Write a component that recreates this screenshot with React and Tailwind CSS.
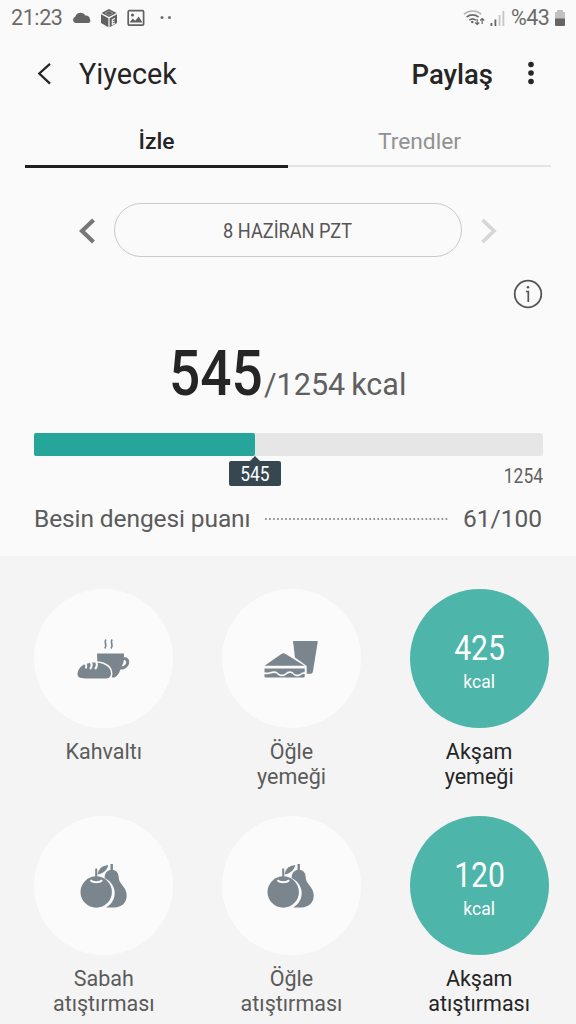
function StatusBar() {
  return (
    <div className="flex h-[36px] items-center pl-[11px] pr-[10px] text-[#6b6b6b]">
      <span className="w-[53px] text-[21.5px] leading-none tracking-[-0.4px]">21:23</span>
      <svg className="ml-[8px]" width="20" height="14" viewBox="0 0 20 14" fill="#656565">
        <path d="M3.500 12a3.300 3.300 0 0 1-.3-6.300A5.600 5.600 0 0 1 13.500 4.600a4 4 0 0 1 4.500 4c.8 1.300.3 3.400-1.500 3.400z" />
      </svg>
      <svg className="ml-[8px]" width="18" height="20" viewBox="0 0 18 20">
        <path d="M9 1l7.5 4L9 9 1.5 5z" fill="#606060" />
        <path d="M1 6.2l7.4 4v9L1 15z" fill="#606060" />
        <path d="M17 6.2l-7.4 4v9L17 15z" fill="#606060" />
        <path d="M14.9 10.4l-2.600 1.400v4.600l2.600-1.400M12.500 14l2-1" fill="none" stroke="#eee" strokeWidth="1.2" />
        <path d="M5 5.200l4-2.100 4 2.100-4 2.100z" fill="none" stroke="#aaa" strokeWidth=".7" />
      </svg>
      <svg className="ml-[9px]" width="18" height="18" viewBox="0 0 18 18">
        <rect x="1.2" y="1.7" width="15.4" height="14.4" rx="1" fill="none" stroke="#626262" strokeWidth="1.7" />
        <path d="M2.500 13.500l3.300-4 2.400 2.300 3.500-4.200 3.800 5.900z" fill="#626262" />
        <circle cx="5.5" cy="6" r="1.6" fill="#626262" />
      </svg>
      <svg className="ml-[14px]" width="14" height="6" viewBox="0 0 14 6" fill="#6d6d6d">
        <circle cx="3" cy="2.5" r="1.5" />
        <circle cx="10.5" cy="2.5" r="1.5" />
      </svg>
      <div className="ml-auto flex items-center">
        <svg width="23" height="20" viewBox="0 0 23 20" fill="none" strokeWidth="1.6">
          <path d="M1 6.2a13 13 0 0 1 17.2 0" stroke="#b2b2b2" />
          <path d="M3.600 9.200a9 9 0 0 1 12 0M6.300 12.200a5.200 5.200 0 0 1 6.600 0" stroke="#6b6b6b" />
          <circle cx="9.3" cy="14" r="1.3" fill="#6b6b6b" />
          <path d="M14.200 11v5.500m-2.100-2 2.100 2 2.100-2M19.200 16v-5.500m-2.100 2 2.100-2 2.100 2" stroke="#666" strokeWidth="1.2" />
        </svg>
        <svg className="ml-[3px]" width="17" height="18" viewBox="0 0 17 18">
          <path d="M1.500 14h1.800v3H1.500zM5.500 10.500h1.800V17H5.500z" fill="#666" />
          <path d="M9.700 6h1.800v11H9.700zM13.500 2h1.800v15h-1.800z" fill="#c5c5c5" />
        </svg>
        <span className="ml-[5px] w-[39px] text-[21.5px] leading-none tracking-[-0.5px]">%43</span>
        <svg className="ml-[4px]" width="12" height="18" viewBox="0 0 12 18">
          <path d="M3 1h6v2H11v7H1V3h2z" fill="#c1c1c1" />
          <path d="M1 9.500h10V16a1 1 0 0 1-1 1H2a1 1 0 0 1-1-1z" fill="#666" />
        </svg>
      </div>
    </div>
  )
}

function BreakfastIcon() {
  return (
    <svg width="54" height="42" viewBox="0 0 54 42" fill="#7b858d">
      <path d="M29 1.500c-3 3.400 2.200 5-1.200 9M35.200 1.500c-3 3.400 2.200 5-1.200 9" fill="none" stroke="#7b858d" strokeWidth="1.7" />
      <path d="M20 15.500h27v3.800c8-.8 6.800 12.200-3.600 12.200-1.300 4.200-3.600 7-6 8h-2.700c2.800-8.500-3-15.400-14.400-16.200z" />
      <path d="M46.800 22.100c3.700-.3 3.200 5.800-2.200 6.500 1.200-1.800 2-4 2.200-6.500z" fill="#fbfbfb" />
      <path d="M8.400 40.500c-6 0-8.400-1.600-7.800-5.400.8-5 5.200-9.200 10-9.600C15.400 23 34 24.200 34 35.200c0 3.800-2 5.300-6 5.300z" />
      <path d="M8 24.800c1.300 1.500 1.500 4.200.6 5.500M13.500 24c1.600 1.800 1.400 4.600-.4 7M19 24c1.400 2 1 4.600-.9 7" fill="none" stroke="#fbfbfb" strokeWidth="2.1" />
    </svg>
  )
}

function LunchIcon() {
  return (
    <svg width="54" height="38" viewBox="0 0 54 38" fill="#7b858d">
      <path d="M29 1h23.800c.7 0 1 .4.900 1l-4.800 29.400c-.2 1.400-1.300 2.300-2.700 2.300h-3.500V26L31 17.400z" />
      <path d="M.5 25.700L17.400 14c1.500-1 2.800-1 4.200 0l19 11.700z" />
      <path d="M.5 28.400h40.200V32c-4.300.4-3.600 2.500-7.500 2.500-4.200 0-3.400-3.300-7.200-3.300-4 0-4 3.300-8 3.300s-3.800-3.300-7.800-3.300-3.500 1.800-9.700 1z" />
      <path d="M.5 34c5.800.8 6.300-1 9.700-1 4 0 3.400 3.300 7.800 3.300 4.300 0 4.300-3.300 8-3.300 3.600 0 3.200 3.300 7.200 3.300 4.200 0 3.600-2.400 7.500-2.500v2.400c0 .8-.6 1.300-1.300 1.300H1.800C1 37.500.5 37 .5 36.200z" />
    </svg>
  )
}

function FruitIcon() {
  return (
    <svg width="48" height="46" viewBox="0 0 48 46" fill="#7b858d">
      <path d="M30.500 1h2.400v6c4 .6 5.800 3.600 5.800 7.300 0 7.300 8 9 8 18.500 0 7-5.200 11.700-12.400 11.700h-8.100c12.200-7 11-23.500-1.400-29.200-.5-4.300 1.700-7.700 5.700-8.300z" />
      <circle cx="16.200" cy="29" r="15.700" />
      <path d="M10.400 17.200c2.600 2.600 9.200 2.600 11.800 0" fill="none" stroke="#fbfbfb" strokeWidth="2" />
      <path d="M15.200 5.500h2v9h-2z" />
      <path d="M17.500 11.500C18.400 5.800 22 2.700 28.300 2c-1.200 5-4.600 8.200-10.800 9.500z" />
    </svg>
  )
}

const meals = [
  { name: ['Kahvaltı'], Icon: BreakfastIcon },
  { name: ['Öğle', 'yemeği'], Icon: LunchIcon },
  { name: ['Akşam', 'yemeği'], kcal: 425 },
  { name: ['Sabah', 'atıştırması'], Icon: FruitIcon },
  { name: ['Öğle', 'atıştırması'], Icon: FruitIcon },
  { name: ['Akşam', 'atıştırması'], kcal: 120 },
]

function Meal({ name, Icon, kcal }) {
  return (
    <button className="flex h-[227px] flex-col items-center" type="button">
      <span
        className={`flex size-[139px] shrink-0 flex-col items-center justify-center rounded-full ${
          kcal ? 'bg-[#4db5a9] text-white' : 'bg-[#fbfbfb]'
        }`}
      >
        {kcal ? (
          <>
            <span className="mt-[5px] inline-block scale-x-[0.86] text-[35px] leading-[40px]">{kcal}</span>
            <span className="mt-[2px] text-[17.5px] leading-[22px]">kcal</span>
          </>
        ) : (
          <Icon />
        )}
      </span>
      <span
        className={`mt-[11px] text-[21.5px] leading-[25px] ${kcal ? 'text-[#252525]' : 'text-[#5b5b5b]'}`}
      >
        {name.map((line) => (
          <span key={line} className="block">{line}</span>
        ))}
      </span>
    </button>
  )
}

export default function App() {
  const eaten = 545
  const goal = 1254

  return (
    <div className="flex h-[1024px] w-[576px] flex-col overflow-hidden bg-[#fafafa] font-[Roboto,'Liberation_Sans',sans-serif] text-[#252525]">
      <StatusBar />

      <header className="flex h-[78px] items-center pl-[36px] pr-[38px]">
        <svg className="-mt-[3px]" width="18" height="24" viewBox="0 0 18 24" fill="none" stroke="#252525" strokeWidth="2.3">
          <path d="M14 1.800L3.300 11.500 14 21.600" />
        </svg>
        <h1 className="ml-[25px] text-[28.8px]">Yiyecek</h1>
        <span className="ml-auto text-[27.5px] font-medium">Paylaş</span>
        <svg className="-mt-[4px] ml-[31px]" width="14" height="26" viewBox="0 0 14 26" fill="#252525">
          <circle cx="7" cy="4.5" r="2.8" />
          <circle cx="7" cy="13" r="2.8" />
          <circle cx="7" cy="21.5" r="2.8" />
        </svg>
      </header>

      <nav className="mx-[25px] flex h-[54px] text-[22.8px]">
        <div className="flex w-[263px] justify-center border-b-[3px] border-[#202020] pt-[11px] font-medium">İzle</div>
        <div className="mb-px flex flex-1 justify-center border-b-2 border-[#e4e4e4] pt-[11px] text-[#929292]">Trendler</div>
      </nav>

      <div className="mt-[35px] flex h-[54px] items-center justify-center">
        <svg className="mt-[2px]" width="18" height="26" viewBox="0 0 18 26" fill="none" stroke="#777" strokeWidth="4.2">
          <path d="M15.500 2L4 13l11.500 11" />
        </svg>
        <div className="mx-[18px] flex h-[54px] w-[348px] items-center justify-center rounded-full border border-[#c9c9c9] pt-[3px] text-[21px] text-[#555]">
          <span className="inline-block scale-x-[0.865]">8 HAZİRAN PZT</span>
        </div>
        <svg className="mt-[2px]" width="18" height="26" viewBox="0 0 18 26" fill="none" stroke="#d5d5d5" strokeWidth="3.6">
          <path d="M2.500 2L14 13 2.500 24" />
        </svg>
      </div>

      <svg className="mt-[22px] ml-[513px] shrink-0" width="30" height="30" viewBox="0 0 30 30" fill="none" stroke="#555">
        <circle cx="15" cy="15" r="13.3" strokeWidth="1.8" />
        <path d="M13 12.500h2.300V23" strokeWidth="1.7" />
        <circle cx="15" cy="8.3" r="1.3" fill="#555" stroke="none" />
      </svg>

      <div className="mt-[29px] flex h-[72px] items-baseline pl-[169px]">
        <span className="inline-block w-[95px] origin-left scale-x-[0.88] text-[62.5px] leading-[72px] font-medium">{eaten}</span>
        <span className="text-[30.5px] text-[#606060]">/{goal}</span>
        <span className="ml-[6px] text-[30.5px] text-[#606060]">kcal</span>
      </div>

      <div className="relative mr-[33px] ml-[33.5px] mt-[23px] h-[23px] rounded-[2px] bg-[#e6e6e6]">
        <div className="h-full rounded-[2px] bg-[#26a69a]" style={{ width: `${(eaten / goal) * 100}%` }} />
        {/* marker below the end of the filled part */}
        <div
          className="absolute top-[28px] flex h-[25px] w-[52px] -translate-x-1/2 items-center justify-center rounded-[2px] bg-[#37474f] text-[20px] text-white"
          style={{ left: `${(eaten / goal) * 100}%` }}
        >
          <svg className="absolute -top-[5px]" width="12" height="6" viewBox="0 0 12 6" fill="#37474f">
            <path d="M0 6l6-6 6 6z" />
          </svg>
          <span className="inline-block scale-x-[0.87]">{eaten}</span>
        </div>
      </div>

      <div className="mt-[5px] flex justify-end pr-[33px]">
        <span className="inline-block origin-right scale-x-[0.87] text-[20px] leading-[30px] text-[#606060]">{goal}</span>
      </div>

      <div className="mt-[10px] flex h-[36px] items-center pl-[34px] pr-[34px] text-[24.5px] text-[#5b5b5b]">
        <span className="tracking-[-0.1px]">Besin dengesi puanı</span>
        <svg className="ml-[14px] flex-1" height="2" viewBox="0 0 184 2" preserveAspectRatio="none">
          <path d="M0 1h184" stroke="#777" strokeWidth="1.5" strokeDasharray="1.8 2.2" />
        </svg>
        <span className="ml-[14px]">61/100</span>
      </div>

      <main className="mt-auto h-[468px] shrink-0 bg-[#f4f4f4] pt-[33px] pr-[3px] pl-[10px]">
        <div className="grid grid-cols-3">
          {meals.map((meal) => (
            <Meal key={meal.name.join(' ')} {...meal} />
          ))}
        </div>
      </main>
    </div>
  )
}
